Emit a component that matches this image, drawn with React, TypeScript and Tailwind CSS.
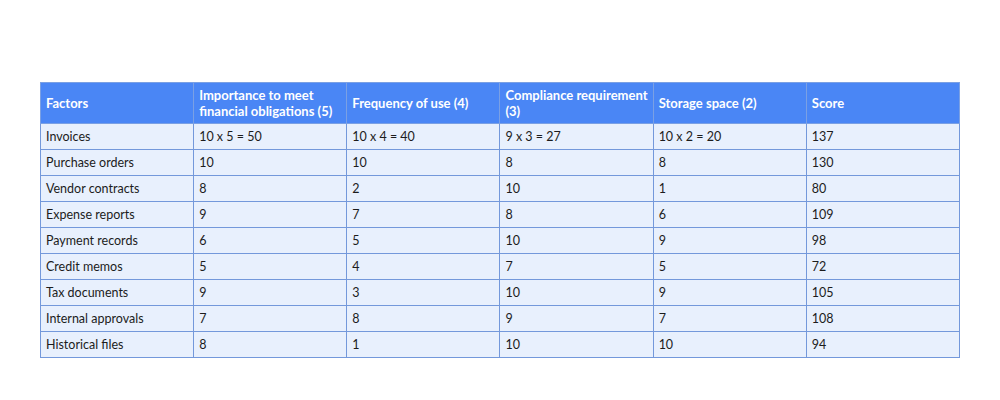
import React from "react";

const headers = [
  "Factors",
  "Importance to meet financial obligations (5)",
  "Frequency of use (4)",
  "Compliance requirement (3)",
  "Storage space (2)",
  "Score",
];

const rows = [
  ["Invoices", "10 x 5 = 50", "10 x 4 = 40", "9 x 3 = 27", "10 x 2 = 20", "137"],
  ["Purchase orders", "10", "10", "8", "8", "130"],
  ["Vendor contracts", "8", "2", "10", "1", "80"],
  ["Expense reports", "9", "7", "8", "6", "109"],
  ["Payment records", "6", "5", "10", "9", "98"],
  ["Credit memos", "5", "4", "7", "5", "72"],
  ["Tax documents", "9", "3", "10", "9", "105"],
  ["Internal approvals", "7", "8", "9", "7", "108"],
  ["Historical files", "8", "1", "10", "10", "94"],
];

export default function App() {
  return (
    <div className="w-[1000px] h-[400px] bg-white pt-[82px] pl-[40px] font-['Lato',_'Noto_Sans',_sans-serif]">
      <table className="w-[920px] table-fixed border-collapse text-[12.5px] text-[#1c1c1c]">
        <thead>
          <tr className="bg-[#4a86f5] h-[41px]">
            {headers.map((h) => (
              <th
                key={h}
                className="border border-[#7aa0e4] px-[5px] text-left align-middle text-[13px] font-bold text-white leading-[16px]"
              >
                {h}
              </th>
            ))}
          </tr>
        </thead>
        <tbody>
          {rows.map((r) => (
            <tr key={r[0]} className="bg-[#e8f0fd] h-[26px]">
              {r.map((c, i) => (
                <td
                  key={i}
                  className="border border-[#7398db] px-[5px] align-middle leading-[16px]"
                >
                  {c}
                </td>
              ))}
            </tr>
          ))}
        </tbody>
      </table>
    </div>
  );
}
